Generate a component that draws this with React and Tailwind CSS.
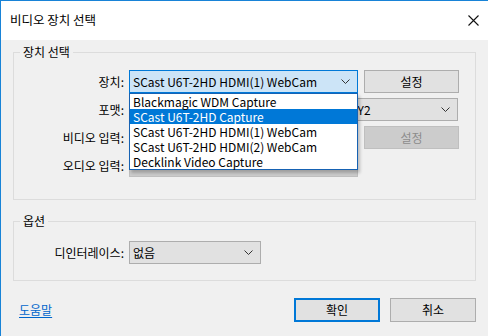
import React from "react";

const font = { fontFamily: '"Noto Sans CJK KR", "Noto Sans", sans-serif' };

function Chevron({ className = "" }) {
  return (
    <svg width="9" height="5" viewBox="0 0 9 5" className={className}>
      <polyline points="0.5,0.5 4.5,4.5 8.5,0.5" fill="none" stroke="#333" strokeWidth="1" />
    </svg>
  );
}

function Combo({ value, width, tone = "normal", children }) {
  const tones = {
    normal: "bg-[#e1e1e1] border-[#adadad]",
    active: "bg-[#cce4f7] border-[#0078d7]",
    disabled: "bg-[#cccccc] border-[#bfbfbf]",
  };
  return (
    <div className="relative shrink-0" style={{ width }}>
      <div className={`h-[23px] border flex items-center justify-between pl-[3px] pr-[7px] ${tones[tone]}`}>
        <span className="whitespace-nowrap">{value}</span>
        {tone !== "disabled" && <Chevron className="shrink-0" />}
      </div>
      {children}
    </div>
  );
}

function Btn({ children, disabled, primary, className = "" }) {
  return (
    <button
      className={`h-[23px] shrink-0 flex items-center justify-center ${
        disabled
          ? "bg-[#cccccc] border border-[#bfbfbf] text-[#8c8c8c]"
          : primary
          ? "bg-[#e1e1e1] border-2 border-[#0078d7] text-black"
          : "bg-[#e1e1e1] border border-[#adadad] text-black"
      } ${className}`}
    >
      {children}
    </button>
  );
}

function Row({ label, labelW = 115, children }) {
  return (
    <div className="flex items-center h-[23px]">
      <div className="text-right shrink-0 pr-[5px]" style={{ width: labelW }}>{label}</div>
      <div className="flex items-center gap-[6px]">{children}</div>
    </div>
  );
}

const devices = [
  "Blackmagic WDM Capture",
  "SCast U6T-2HD Capture",
  "SCast U6T-2HD HDMI(1) WebCam",
  "SCast U6T-2HD HDMI(2) WebCam",
  "Decklink Video Capture",
];

export default function App() {
  return (
    <div
      className="w-[488px] h-[336px] bg-[#f0f0f0] border-t border-l border-[#1883d7] overflow-hidden text-[12px] text-black flex flex-col"
      style={font}
    >
      {/* title bar */}
      <div className="h-[39px] bg-white flex items-center justify-between pl-[9px] pr-[9px] shrink-0">
        <span className="text-[12.5px]">비디오 장치 선택</span>
        <svg width="11" height="11" viewBox="0 0 11 11">
          <path d="M0.5 0.5 L10.5 10.5 M10.5 0.5 L0.5 10.5" stroke="#111" strokeWidth="1.1" />
        </svg>
      </div>

      <div className="pl-[12px] pr-[12px] pt-[5px] flex flex-col">
        {/* device group */}
        <fieldset className="border border-[#dcdcdc] h-[155px] pt-[11px] w-[463px]">
          <legend className="ml-[6px] px-[3px] leading-[14px]">장치 선택</legend>
          <div className="flex flex-col gap-[5px]">
            <Row label="장치:">
              <Combo value="SCast U6T-2HD HDMI(1) WebCam" width={229} tone="active">
                <div className="absolute left-0 top-[23px] w-[229px] border border-[#1662b3] bg-white z-10 shadow-[2px_3px_3px_rgba(0,0,0,0.22)]">
                  {devices.map((d, i) => (
                    <div
                      key={d}
                      className={`h-[15px] leading-[15px] pl-[3px] whitespace-nowrap ${
                        i === 1 ? "bg-[#0078d7] text-white" : ""
                      }`}
                    >
                      {d}
                    </div>
                  ))}
                </div>
              </Combo>
              <Btn className="w-[95px]">설정</Btn>
            </Row>
            <Row label="포맷:">
              <Combo value="1920 x 1080 (16:9), 59.940 fps, 16 bits, YUY2" width={329} />
            </Row>
            <Row label="비디오 입력:">
              <Combo value="" width={229} tone="disabled" />
              <Btn disabled className="w-[95px]">설정</Btn>
            </Row>
            <Row label="오디오 입력:">
              <Combo value="" width={229} tone="disabled" />
            </Row>
          </div>
        </fieldset>

        {/* options group */}
        <fieldset className="border border-[#dcdcdc] h-[67px] mt-[14px] pt-[13px] w-[463px]">
          <legend className="ml-[6px] px-[3px] leading-[14px]">옵션</legend>
          <Row label="디인터레이스:">
            <Combo value="없음" width={132} />
          </Row>
        </fieldset>

        {/* bottom bar */}
        <div className="flex items-center justify-between mt-[17px] w-[463px]">
          <a className="ml-[6px] text-[#0066cc] underline underline-offset-2">도움말</a>
          <div className="flex gap-[10px]">
            <Btn primary className="w-[86px] h-[24px]">확인</Btn>
            <Btn className="w-[86px] h-[24px]">취소</Btn>
          </div>
        </div>
      </div>
    </div>
  );
}
